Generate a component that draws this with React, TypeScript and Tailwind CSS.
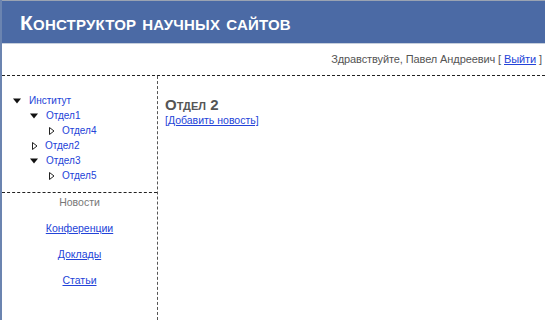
import { ReactNode } from "react";

type Node = { id: number; name: string; level: number; open: boolean };

const tree: Node[] = [
  { id: 1, name: "Институт", level: 0, open: true },
  { id: 2, name: "Отдел1", level: 1, open: true },
  { id: 3, name: "Отдел4", level: 2, open: false },
  { id: 4, name: "Отдел2", level: 1, open: false },
  { id: 5, name: "Отдел3", level: 1, open: true },
  { id: 6, name: "Отдел5", level: 2, open: false },
];

const menu = ["Конференции", "Доклады", "Статьи"];

const indent = ["pl-[11px]", "pl-[28px]", "pl-[45px]"];

function Arrow({ open }: { open: boolean }) {
  if (open) {
    return (
      <svg width="9" height="6" viewBox="0 0 9 6" className="mr-[7px] shrink-0">
        <path d="M0 0.5 H8 L4 5.5 Z" fill="#111" />
      </svg>
    );
  }
  return (
    <svg width="9" height="8" viewBox="0 0 9 8" className="mr-[5px] ml-[1px] shrink-0">
      <path d="M1.5 0.5 L6 4 L1.5 7.5 Z" fill="#fff" stroke="#222" strokeWidth="1" />
    </svg>
  );
}

function Link({ children }: { children: ReactNode }) {
  return <a className="text-[#2343d8] underline underline-offset-1 cursor-pointer">{children}</a>;
}

export default function App() {
  return (
    <div className="w-[545px] h-[320px] overflow-hidden bg-white border-l-2 border-[#6b84b0] font-['Liberation_Sans',Arial,sans-serif] flex flex-col">
      <header className="h-[44px] shrink-0 bg-[#4b6aa5] border-t border-[#9aa3b2] border-b border-b-[#c6cfdc] pl-[18px] flex items-center">
        <h1 className="text-white font-bold text-[21px] [font-variant:small-caps] tracking-[0.2px] leading-none mt-[1px]">
          Конструктор научных сайтов
        </h1>
      </header>
      <div className="h-[31px] shrink-0 flex items-center justify-end pr-[3px] text-[11px] text-[#555] pb-[1px] tracking-[-0.1px]">
        Здравствуйте, Павел Андреевич [&nbsp;<Link>Выйти</Link>&nbsp;]
      </div>
      <div className="flex flex-1 border-t border-dashed border-[#222]">
        <aside className="w-[156px] shrink-0 border-r border-dashed border-[#555] flex flex-col">
          <ul className="pt-[17px] pb-[9px] border-b border-dashed border-[#222] text-[10px] text-[#2343d8]">
            {tree.map((n) => (
              <li key={n.id} className={"h-[15px] flex items-center " + indent[n.level]}>
                <Arrow open={n.open} />
                <span>{n.name}</span>
              </li>
            ))}
          </ul>
          <nav className="flex flex-col items-center text-[10.5px] pt-[2px]">
            <span className="text-[#777] h-[26px]">Новости</span>
            {menu.map((m) => (
              <span key={m} className="h-[26px]">
                <Link>{m}</Link>
              </span>
            ))}
          </nav>
        </aside>
        <main className="pl-[7px] pt-[21px]">
          <h2 className="text-[15px] font-bold text-[#555] [font-variant:small-caps] leading-none">
            Отдел 2
          </h2>
          <div className="text-[10.5px] mt-[1px] text-[#2343d8]">
            <Link>[Добавить новость]</Link>
          </div>
        </main>
      </div>
    </div>
  );
}
